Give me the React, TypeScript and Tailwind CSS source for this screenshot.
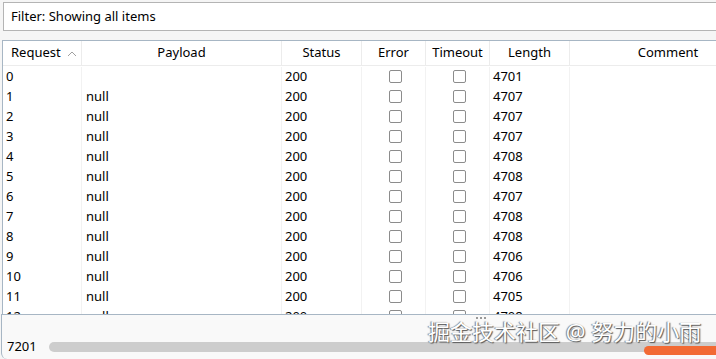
import React from 'react';

const rows = [
    { req: '0', payload: '', status: '200', len: '4701' },
    { req: '1', payload: 'null', status: '200', len: '4707' },
    { req: '2', payload: 'null', status: '200', len: '4707' },
    { req: '3', payload: 'null', status: '200', len: '4707' },
    { req: '4', payload: 'null', status: '200', len: '4708' },
    { req: '5', payload: 'null', status: '200', len: '4708' },
    { req: '6', payload: 'null', status: '200', len: '4707' },
    { req: '7', payload: 'null', status: '200', len: '4708' },
    { req: '8', payload: 'null', status: '200', len: '4708' },
    { req: '9', payload: 'null', status: '200', len: '4706' },
    { req: '10', payload: 'null', status: '200', len: '4706' },
    { req: '11', payload: 'null', status: '200', len: '4705' },
    { req: '12', payload: 'null', status: '200', len: '4708' },
];

const cols = 'grid grid-cols-[79px_200px_80px_64px_64px_80px_200px]';

const Checkbox = () => (
    <div className="w-[13px] h-[13px] rounded-[2px] border border-[#8c8c8c] bg-white" />
);

export default function App() {
    return (
        <div
            className="w-[716px] h-[359px] overflow-hidden bg-[#f5f5f5] text-[13px] text-black flex flex-col"
            style={{ fontFamily: '"Noto Sans", "Noto Sans CJK SC", sans-serif' }}
        >
            <div className="pl-[3px] pt-[2px] h-[40px]">
                <div className="h-[29px] bg-white border border-[#b4b4b4] border-r-0 flex items-center pl-[7px]">
                    Filter: Showing all items
                </div>
            </div>

            <div className="ml-[2px] h-[274px] bg-white border-t border-l border-[#a7b6c4] overflow-hidden">
                <div className={`${cols} h-[25px] border-b border-[#ececec]`}>
                    <div className="flex items-center pl-[8px] border-r border-[#ececec]">
                        Request
                        <svg width="10" height="6" viewBox="0 0 10 6" className="ml-[6px] mt-[1px]">
                            <path d="M1 5 L5 1 L9 5" fill="none" stroke="#a0a0a0" strokeWidth="1" />
                        </svg>
                    </div>
                    <div className="flex items-center justify-center border-r border-[#ececec]">Payload</div>
                    <div className="flex items-center justify-center border-r border-[#ececec]">Status</div>
                    <div className="flex items-center justify-center border-r border-[#ececec]">Error</div>
                    <div className="flex items-center justify-center border-r border-[#ececec]">Timeout</div>
                    <div className="flex items-center justify-center border-r border-[#ececec]">Length</div>
                    <div className="flex items-center justify-center pr-[4px]">Comment</div>
                </div>
                {rows.map((r) => (
                    <div key={r.req} className={`${cols} h-[20px] pt-[1px]`}>
                        <div className="flex items-center pl-[3px] border-r border-[#f2f2f2]">{r.req}</div>
                        <div className="flex items-center pl-[4px] border-r border-[#f2f2f2]">{r.payload}</div>
                        <div className="flex items-center pl-[3px] border-r border-[#f2f2f2]">{r.status}</div>
                        <div className="flex items-center justify-center pl-[3px] border-r border-[#f2f2f2]"><Checkbox /></div>
                        <div className="flex items-center justify-center pl-[3px] border-r border-[#f2f2f2]"><Checkbox /></div>
                        <div className="flex items-center pl-[3px] border-r border-[#f2f2f2]">{r.len}</div>
                        <div />
                    </div>
                ))}
            </div>

            <div className="relative flex-1 ml-[1px] bg-[#f9f9f9] border-t border-l border-[#a7b6c4] rounded-bl-[6px]">
                <div className="absolute left-[474px] top-[2px] flex gap-[2px]">
                    <span className="w-[2px] h-[2px] bg-[#999]" />
                    <span className="w-[2px] h-[2px] bg-[#999]" />
                    <span className="w-[2px] h-[2px] bg-[#999]" />
                </div>
                <div className="flex items-center h-full pt-[20px] pl-[5px]">
                    <span className="w-[42px]">7201</span>
                    <div className="relative flex-1 h-[10px] rounded-l-full bg-[#cdcdcd]">
                        <div className="absolute right-0 top-[4px] w-[72px] h-[9px] rounded-l-full bg-[#f26a34]" />
                    </div>
                </div>
                <div
                    className="absolute left-[426px] top-[2px] text-[22px] leading-[28px] text-white whitespace-nowrap"
                    style={{ textShadow: '1px 1px 1px #555, -1px 0 1px #777' }}
                >
                    掘金技术社区 @ 努力的小雨
                </div>
            </div>
        </div>
    );
}
